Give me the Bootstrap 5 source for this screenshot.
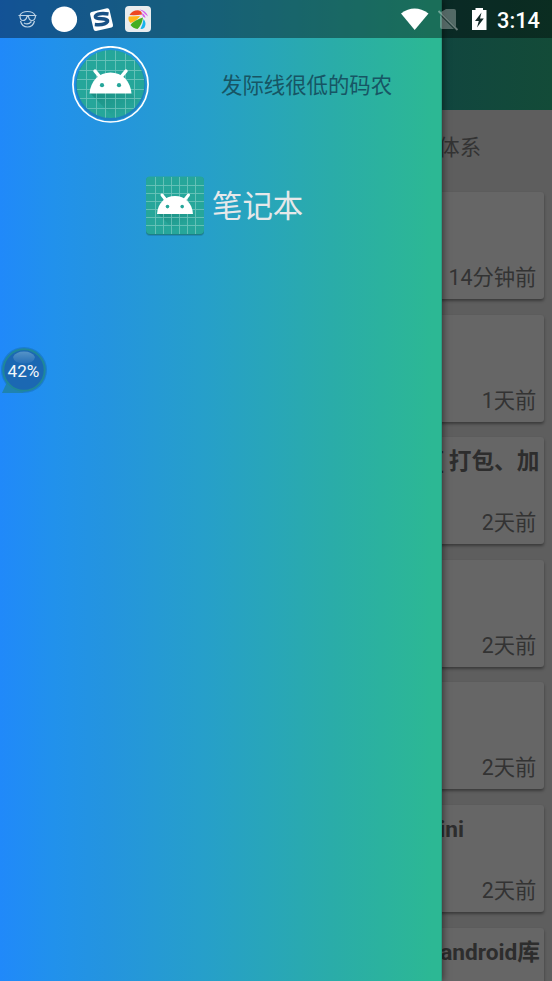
<!DOCTYPE html>
<html lang="zh-CN">
<head>
<meta charset="utf-8">
<meta name="viewport" content="width=device-width, initial-scale=1">
<title>笔记本</title>
<link href="https://cdn.jsdelivr.net/npm/bootstrap@5.3.0/dist/css/bootstrap.min.css" rel="stylesheet">
<style>
body{font-family:Roboto,"Noto Sans CJK SC",sans-serif;font-size:21.33px;line-height:30px;background:#5e5e5e}
.app-screen{width:552px;height:981px;color:#333}
.app-toolbar{height:110px;background:linear-gradient(90deg,#0d3766,#11463f 80%,#134b38)}
.topic-tab{height:82px;padding:23px 71px 0 0}
.note-list{gap:15.6px;padding:0 8px}
.note{height:107px;background:#666;border:0;border-radius:3px;box-shadow:0 2px 3px rgba(0,0,0,.38);padding:10px 4px 6px}
.note-title{font-size:22.7px;font-weight:700;color:#2d2d2d;white-space:pre;line-height:30px}
.note-title.cjk-title{font-weight:600;padding-right:.5px}
.note-title.short-title{padding-right:76px}
.note-date{padding-right:3.6px;line-height:30px}
.drawer{width:442px;background:linear-gradient(90deg,#2089fa 0%,#2191ec 12%,#2494df 24%,#269fca 46%,#2aaca9 75%,#2cb894 98%);box-shadow:1px 0 7px rgba(0,0,0,.5);border-right:1px solid #2a9f82}
.drawer-head{height:92px;padding:8px 0 0 71px;margin-top:38px}
.user-name{margin-left:72px;margin-top:25px;font-size:21.4px;line-height:30px;color:#175564}
.drawer-item{padding:44px 0 0 145px;gap:7px}
.item-label{font-size:30.4px;line-height:40px;color:#e6e8ea;margin-top:13px}
.status-bar{height:38px;background:rgba(0,0,0,.4)}
.clock{font-size:21.8px;font-weight:500;line-height:41px;margin-left:7px;color:#fff}
.float-ball{left:0;top:345px}
svg{display:block}
</style>
</head>
<body class="overflow-hidden">
<div class="app-screen position-relative overflow-hidden">
  <main class="d-flex flex-column">
    <div class="app-toolbar flex-shrink-0"></div>
    <div class="topic-tab text-end flex-shrink-0">体系</div>
    <div class="note-list d-flex flex-column">
      <div class="note card flex-shrink-0 text-end justify-content-end"><div class="note-date">14分钟前</div></div>
      <div class="note card flex-shrink-0 text-end justify-content-end"><div class="note-date">1天前</div></div>
      <div class="note card flex-shrink-0 text-end justify-content-between"><div class="note-title cjk-title">[ 打包、加</div><div class="note-date">2天前</div></div>
      <div class="note card flex-shrink-0 text-end justify-content-end"><div class="note-date">2天前</div></div>
      <div class="note card flex-shrink-0 text-end justify-content-end"><div class="note-date">2天前</div></div>
      <div class="note card flex-shrink-0 text-end justify-content-between"><div class="note-title short-title">ini</div><div class="note-date">2天前</div></div>
      <div class="note card flex-shrink-0 text-end"><div class="note-title">android库</div></div>
    </div>
  </main>

  <aside class="drawer position-absolute top-0 start-0 h-100">
    <div class="drawer-head d-flex align-items-start">
      <svg width="78" height="78" viewBox="0 0 78 78">
        <defs>
          <clipPath id="disc"><circle cx="39.500" cy="38" r="34"/></clipPath>
          <linearGradient id="long" x1="0" y1="0" x2="1" y2="1"><stop offset="0" stop-color="#00574b" stop-opacity=".3"/><stop offset=".6" stop-color="#00574b" stop-opacity="0"/></linearGradient>
        </defs>
        <circle cx="39.500" cy="39.500" r="35" fill="#1b78b5" opacity=".75"/>
        <g clip-path="url(#disc)">
          <rect width="78" height="78" fill="#26a69a"/>
          <path d="M19 47 49 78H78V66L60 47Z" fill="url(#long)"/>
          <path d="M15.500 0V78M25.500 0V78M34.500 0V78M44.500 0V78M54.500 0V78M63.500 0V78M0 14.500H78M0 24.500H78M0 33.500H78M0 43.500H78M0 52.500H78M0 62.500H78" stroke="#8fd2cb" stroke-width=".9" opacity=".65"/>
        </g>
        <circle cx="39.500" cy="38.400" r="37.600" fill="none" stroke="#fff" stroke-width="1.700"/>
        <path d="M24 25 29 31M55 25 50 31" stroke="#fff" stroke-width="3.500" stroke-linecap="round"/>
        <path d="M18.500 47.500C19.500 35 28 26.500 39.500 26.500S59.500 35 60.500 47.500Z" fill="#fff"/>
        <circle cx="31" cy="39.200" r="2.100" fill="#26a69a"/><circle cx="48" cy="39.200" r="2.100" fill="#26a69a"/>
      </svg>
      <div class="user-name">发际线很低的码农</div>
    </div>
    <div class="drawer-item d-flex align-items-start">
      <svg width="60" height="63" viewBox="0 0 60 63">
        <rect x="1" y="4" width="58" height="58" rx="4" fill="#154f70" opacity=".25"/>
        <rect x="1" y="3" width="58" height="58" rx="4" fill="#1d7f85"/>
        <rect x="1" y="2.500" width="58" height="57.500" rx="4" fill="#26a69a"/>
        <path d="M12 39 33 59.500H55Q59 59.500 59 56V50L47 39Z" fill="url(#long)"/>
        <path d="M10.500 3V60M18.500 3V60M26.500 3V60M34.500 3V60M42.500 3V60M50.500 3V60M1 11.500H59M1 19.500H59M1 27.500H59M1 35.500H59M1 43.500H59M1 51.500H59" stroke="#8fd2cb" stroke-width=".9" opacity=".65"/>
        <path d="M17 21 21 26M43.500 21 39.500 26" stroke="#fff" stroke-width="3" stroke-linecap="round"/>
        <path d="M12 40C12.800 29 20 22 30 22S47.200 29 48 40Z" fill="#fff"/>
        <circle cx="22.500" cy="32.600" r="1.800" fill="#26a69a"/><circle cx="37.200" cy="32.600" r="1.800" fill="#26a69a"/>
      </svg>
      <div class="item-label">笔记本</div>
    </div>
  </aside>

  <div class="float-ball position-absolute">
    <svg width="48" height="50" viewBox="0 0 48 50">
      <defs><linearGradient id="gloss" x1="0" y1="0" x2="0" y2="1"><stop offset="0" stop-color="#5f9bcb"/><stop offset="1" stop-color="#2870b8"/></linearGradient></defs>
      <circle cx="24" cy="25" r="23" fill="#176fb5" opacity=".55"/>
      <path d="M8 35 2 48H24Z" fill="#1f83b0"/>
      <circle cx="24" cy="25" r="20.700" fill="#1b68b3" stroke="#1f879a" stroke-width="2"/>
      <path d="M13 12Q16 6.500 24 6.500T35 12Q34 18.500 24 18.500T13 12Z" fill="url(#gloss)" opacity=".85"/>
      <text x="23.500" y="31.500" text-anchor="middle" font-size="17.200" fill="#f2f6fa">42%</text>
    </svg>
  </div>

  <header class="status-bar position-absolute top-0 start-0 w-100 d-flex">
    <svg width="490" height="38" viewBox="0 0 490 38">
      <g fill="none" stroke="#bdd3e5" stroke-width="1.200">
        <path d="M20 15Q22 11.500 27.500 11.500T35 15M20.500 21Q22 27 27.500 27T34.500 21M24 23Q28 25.500 31.500 21.500"/>
        <path d="M18.500 15.500H36.500M20 16Q20 20.500 23 20.500T27 16.500H28.500Q29 20.500 32 20.500T35.500 16"/>
      </g>
      <circle cx="64.300" cy="19.200" r="12.800" fill="#fff"/>
      <path d="M91.500 12 107 8.200Q109 8 109.500 10L113 25Q113.200 27 111.500 27.500L96 31Q94 31.200 93.500 29L90 14Q90 12.500 91.500 12Z" fill="#fff"/>
      <path d="M108.500 14Q98 12.500 95.500 16C94 20.500 108.500 17 107.500 21.500Q105 25.500 94.800 24.500" fill="none" stroke="#195184" stroke-width="3.500"/>
      <rect x="125" y="6" width="26" height="26" rx="4" fill="#e9ecee"/>
      <path d="M129.500 15Q132 10.200 138 10.200Q142 10.500 142 14.500Q136 15.500 129.500 15Z" fill="#ee4722"/>
      <path d="M128.800 16.500 140 16Q137 21 130.500 23Q127.500 20 128.800 16.500Z" fill="#ffb61a"/>
      <path d="M130.500 25Q134 20 143 17.500Q142 25 137.500 29Q133 28.500 130.500 25Z" fill="#45ae22"/>
      <path d="M143.500 19Q147 23 144.500 27.500Q142.500 29.500 140.500 29Q143 24 143.500 19Z" fill="#18b5ed"/>
      <path d="M139.500 9.500Q146 10.500 148 16.500L145 14Q143 11 139.500 9.500ZM141.500 13Q145 14 145.500 18L143 16.500Z" fill="#d65cec"/>
      <path d="M401 13.500Q414.500 3.500 428.500 13.500L414.700 30Z" fill="#fff"/>
      <path d="M446 9H454Q456 9 456 11V27L441 12ZM440 15 454 29H442Q440 29 440 27Z" fill="#fff" opacity=".3"/>
      <path d="M438.500 11 457.500 30" stroke="#fff" stroke-width="1.800" opacity=".38"/>
      <path d="M472 10H475.500V8H483V10H486.500V30H472Z" fill="#fff"/>
      <path d="M481.500 12.500 475 21H478.800L477 27.500 483.800 18.500H480Z" fill="#122b29"/>
    </svg>
    <div class="clock">3:14</div>
  </header>
</div>
<script src="https://cdn.jsdelivr.net/npm/bootstrap@5.3.0/dist/js/bootstrap.bundle.min.js"></script>
</body>
</html>
